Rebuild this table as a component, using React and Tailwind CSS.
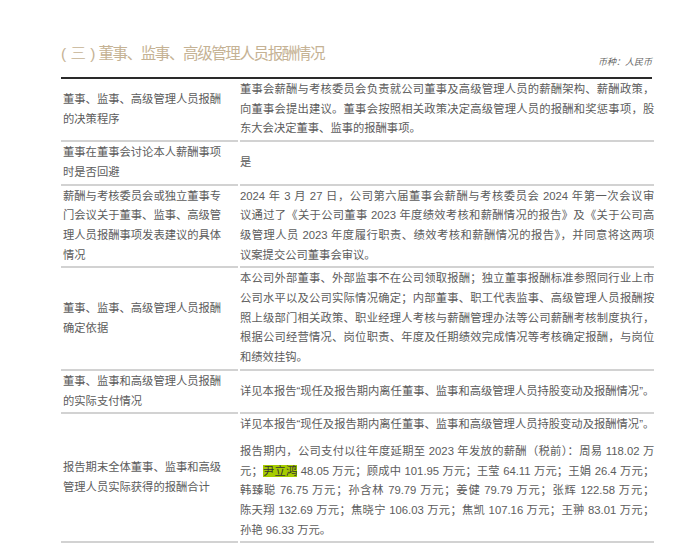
import React from "react";

const FONT = {
  fontFamily: '"Liberation Sans", "Noto Sans CJK SC", sans-serif',
};

// each line of a right-hand cell is justified to the full width, except the last
const Lines = ({ lines }) => (
  <>
    {lines.map((line, idx) => (
      <span
        key={idx}
        className={`block whitespace-nowrap text-justify ${
          idx < lines.length - 1 ? "[text-align-last:justify]" : ""
        }`}
      >
        {line}
      </span>
    ))}
  </>
);

const rows = [
  {
    label: ["董事、监事、高级管理人员报酬", "的决策程序"],
    body: [
      [
        "董事会薪酬与考核委员会负责就公司董事及高级管理人员的薪酬架构、薪酬政策，",
        "向董事会提出建议。董事会按照相关政策决定高级管理人员的报酬和奖惩事项，股",
        "东大会决定董事、监事的报酬事项。",
      ],
    ],
  },
  {
    label: ["董事在董事会讨论本人薪酬事项", "时是否回避"],
    body: [["是"]],
  },
  {
    label: [
      "薪酬与考核委员会或独立董事专",
      "门会议关于董事、监事、高级管",
      "理人员报酬事项发表建议的具体",
      "情况",
    ],
    body: [
      [
        "2024 年 3 月 27 日，公司第六届董事会薪酬与考核委员会 2024 年第一次会议审",
        "议通过了《关于公司董事 2023 年度绩效考核和薪酬情况的报告》及《关于公司高",
        "级管理人员 2023 年度履行职责、绩效考核和薪酬情况的报告》，并同意将这两项",
        "议案提交公司董事会审议。",
      ],
    ],
  },
  {
    label: ["董事、监事、高级管理人员报酬", "确定依据"],
    body: [
      [
        "本公司外部董事、外部监事不在公司领取报酬；独立董事报酬标准参照同行业上市",
        "公司水平以及公司实际情况确定；内部董事、职工代表监事、高级管理人员报酬按",
        "照上级部门相关政策、职业经理人考核与薪酬管理办法等公司薪酬考核制度执行，",
        "根据公司经营情况、岗位职责、年度及任期绩效完成情况等考核确定报酬，与岗位",
        "和绩效挂钩。",
      ],
    ],
  },
  {
    label: ["董事、监事和高级管理人员报酬", "的实际支付情况"],
    body: [
      ["详见本报告“现任及报告期内离任董事、监事和高级管理人员持股变动及报酬情况”。"],
    ],
  },
  {
    label: ["报告期末全体董事、监事和高级", "管理人员实际获得的报酬合计"],
    body: [
      ["详见本报告“现任及报告期内离任董事、监事和高级管理人员持股变动及报酬情况”。"],
      [
        "报告期内，公司支付以往年度延期至 2023 年发放的薪酬（税前）：周易 118.02 万",
        <>
          元；<span className="bg-[#a6cc00] text-[#333]">尹立鸿</span> 48.05
          万元；顾成中 101.95 万元；王莹 64.11 万元；王娟 26.4 万元；
        </>,
        "韩臻聪 76.75 万元；孙含林 79.79 万元；姜健 79.79 万元；张辉 122.58 万元；",
        "陈天翔 132.69 万元；焦晓宁 106.03 万元；焦凯 107.16 万元；王翀 83.01 万元；",
        "孙艳 96.33 万元。",
      ],
    ],
  },
];

export default function App() {
  return (
    <div className="w-[700px] h-[549px] bg-white overflow-hidden" style={FONT}>
      <div className="pl-[61px] pr-[48px]">
        {/* heading */}
        <div className="flex justify-between items-start pt-[44px]">
          <h2 className="text-[15.5px] leading-[20px] text-[#c5b294]">
            <span className="font-light">( 三 )</span>
            <span className="ml-[3px] tracking-[-1.4px]">董事、监事、高级管理人员报酬情况</span>
          </h2>
          <span className="mt-[12px] text-[9px] leading-[12px] italic text-[#666]">
            币种：人民币
          </span>
        </div>

        <div className="mt-[9px] h-[2px] bg-[#2a2a2a]" />

        {/* table */}
        <div className="grid grid-cols-[177px_1fr] gap-x-[2px] text-[11.3px] leading-[19.7px] text-[#5c5c5c]">
          {rows.map((row, i) => (
            <React.Fragment key={i}>
              <div className="flex flex-col justify-center py-px pl-[2px] border-b-2 border-[#d2d2d2]">
                {row.label.map((l, j) => (
                  <span key={j} className="block whitespace-nowrap">
                    {l}
                  </span>
                ))}
              </div>
              <div className="flex flex-col justify-center gap-[7px] py-px border-b-2 border-[#d2d2d2]">
                {row.body.map((para, j) => (
                  <div key={j}>
                    <Lines lines={para} />
                  </div>
                ))}
              </div>
            </React.Fragment>
          ))}
        </div>
      </div>
    </div>
  );
}
